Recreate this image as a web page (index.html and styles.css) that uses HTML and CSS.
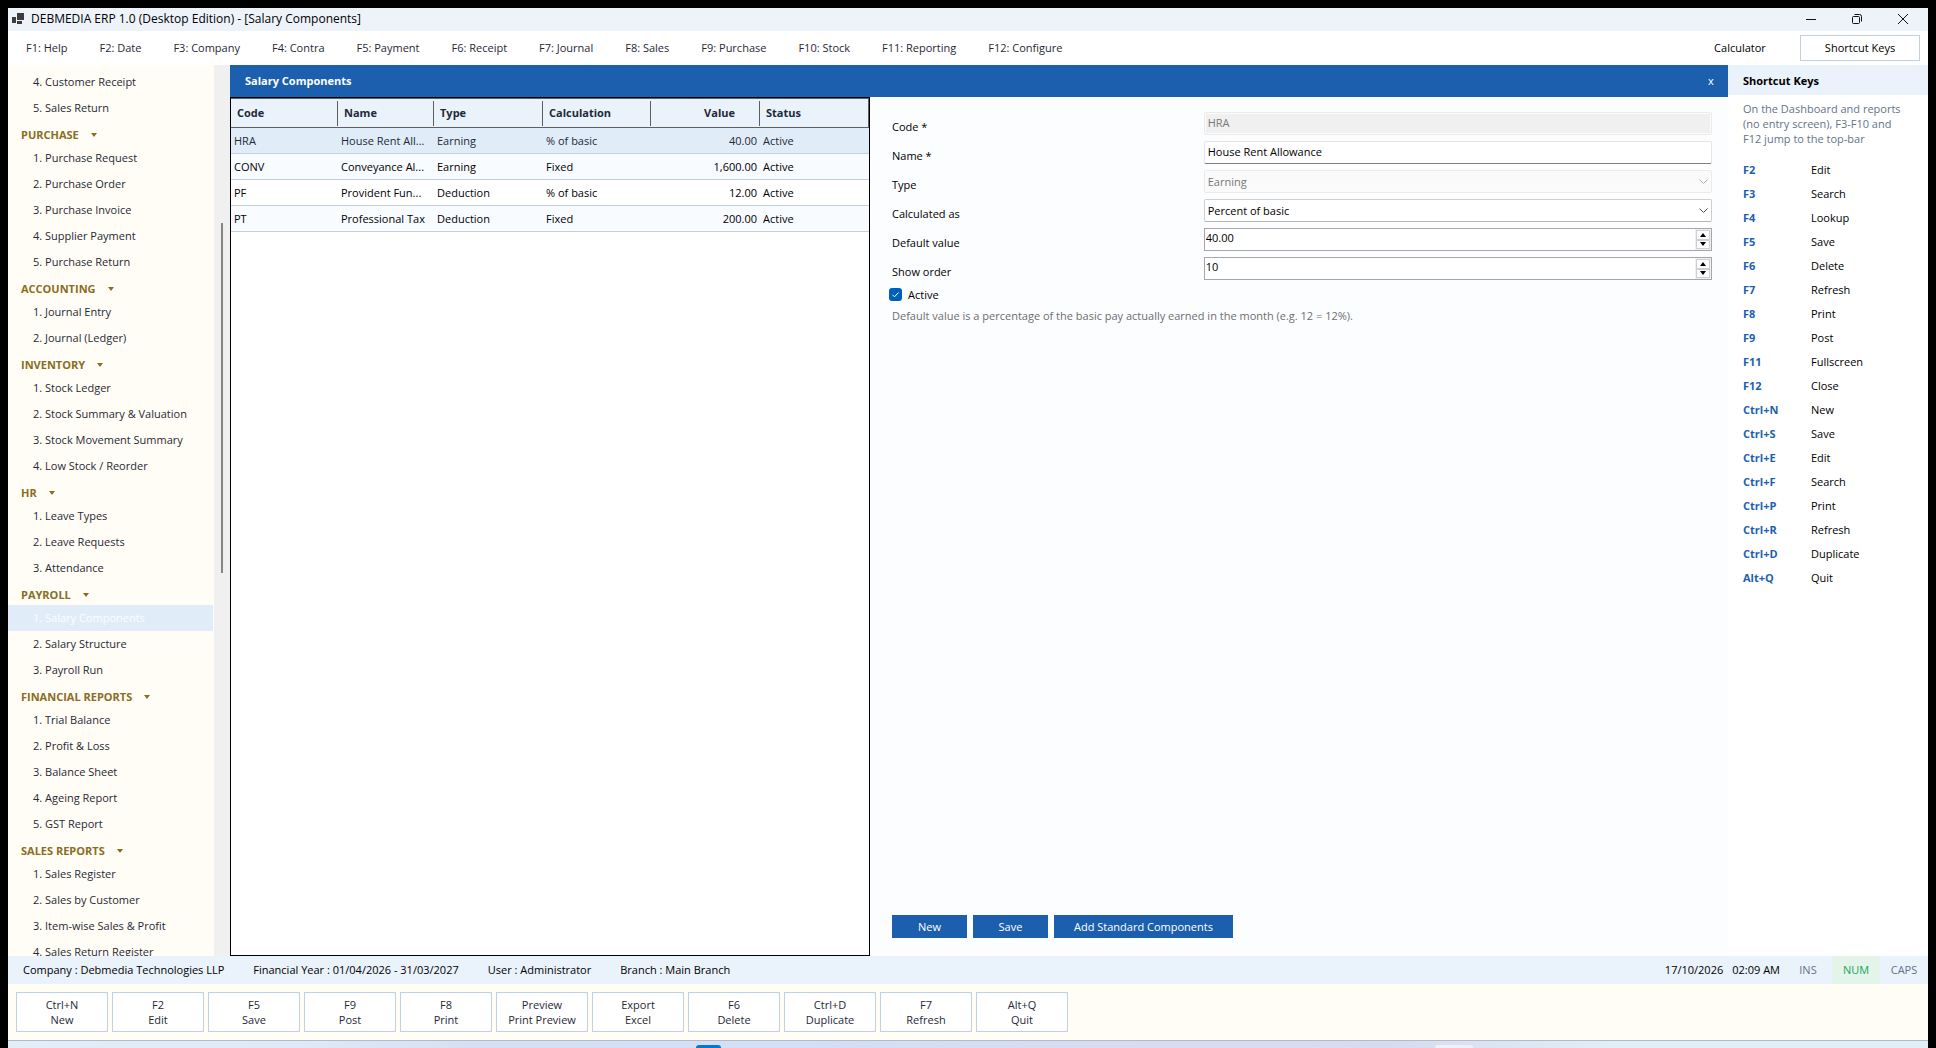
FILE: index.html
```html
<!DOCTYPE html>
<html lang="en">
<head>
<meta charset="utf-8">
<title>DEBMEDIA ERP 1.0 (Desktop Edition) - [Salary Components]</title>
<link rel="stylesheet" href="styles.css">
</head>
<body>
<div class="window">
  <header class="titlebar">
    <svg class="app-icon" width="13" height="12" viewBox="0 0 13 12"><path fill="#3d3d3d" d="M5 0h7v7H5zM0 4h4v6H0zM5 8h5v3H5z"/></svg>
    <h1 class="app-title">DEBMEDIA ERP 1.0 (Desktop Edition) - [Salary Components]</h1>
    <div class="window-controls">
      <button type="button" class="window-button" aria-label="Minimize"><svg width="10" height="10" viewBox="0 0 10 10"><path d="M0 5.5h10"/></svg></button>
      <button type="button" class="window-button" aria-label="Restore"><svg width="10" height="10" viewBox="0 0 10 10"><rect x=".5" y="2.5" width="7" height="7" rx="1"/><path d="M2.5.5h5a2 2 0 0 1 2 2v5"/></svg></button>
      <button type="button" class="window-button" aria-label="Close"><svg width="10" height="10" viewBox="0 0 10 10"><path d="M0 0l10 10M10 0L0 10"/></svg></button>
    </div>
  </header>

  <nav class="menubar">
    <button type="button" class="menu-item">F1: Help</button>
    <button type="button" class="menu-item">F2: Date</button>
    <button type="button" class="menu-item">F3: Company</button>
    <button type="button" class="menu-item">F4: Contra</button>
    <button type="button" class="menu-item">F5: Payment</button>
    <button type="button" class="menu-item">F6: Receipt</button>
    <button type="button" class="menu-item">F7: Journal</button>
    <button type="button" class="menu-item">F8: Sales</button>
    <button type="button" class="menu-item">F9: Purchase</button>
    <button type="button" class="menu-item">F10: Stock</button>
    <button type="button" class="menu-item">F11: Reporting</button>
    <button type="button" class="menu-item">F12: Configure</button>
    <div class="menu-tools">
      <button type="button" class="tool-button">Calculator</button>
      <button type="button" class="tool-button tool-button-active">Shortcut Keys</button>
    </div>
  </nav>

  <div class="workspace">
    <div class="sidebar">
      <nav class="tree">
        <a class="tree-item" href="#">4. Customer Receipt</a>
        <a class="tree-item" href="#">5. Sales Return</a>
        <h2 class="tree-group">PURCHASE</h2>
        <a class="tree-item" href="#">1. Purchase Request</a>
        <a class="tree-item" href="#">2. Purchase Order</a>
        <a class="tree-item" href="#">3. Purchase Invoice</a>
        <a class="tree-item" href="#">4. Supplier Payment</a>
        <a class="tree-item" href="#">5. Purchase Return</a>
        <h2 class="tree-group">ACCOUNTING</h2>
        <a class="tree-item" href="#">1. Journal Entry</a>
        <a class="tree-item" href="#">2. Journal (Ledger)</a>
        <h2 class="tree-group">INVENTORY</h2>
        <a class="tree-item" href="#">1. Stock Ledger</a>
        <a class="tree-item" href="#">2. Stock Summary &amp; Valuation</a>
        <a class="tree-item" href="#">3. Stock Movement Summary</a>
        <a class="tree-item" href="#">4. Low Stock / Reorder</a>
        <h2 class="tree-group">HR</h2>
        <a class="tree-item" href="#">1. Leave Types</a>
        <a class="tree-item" href="#">2. Leave Requests</a>
        <a class="tree-item" href="#">3. Attendance</a>
        <h2 class="tree-group">PAYROLL</h2>
        <a class="tree-item tree-item-selected" href="#">1. Salary Components</a>
        <a class="tree-item" href="#">2. Salary Structure</a>
        <a class="tree-item" href="#">3. Payroll Run</a>
        <h2 class="tree-group">FINANCIAL REPORTS</h2>
        <a class="tree-item" href="#">1. Trial Balance</a>
        <a class="tree-item" href="#">2. Profit &amp; Loss</a>
        <a class="tree-item" href="#">3. Balance Sheet</a>
        <a class="tree-item" href="#">4. Ageing Report</a>
        <a class="tree-item" href="#">5. GST Report</a>
        <h2 class="tree-group">SALES REPORTS</h2>
        <a class="tree-item" href="#">1. Sales Register</a>
        <a class="tree-item" href="#">2. Sales by Customer</a>
        <a class="tree-item" href="#">3. Item-wise Sales &amp; Profit</a>
        <a class="tree-item" href="#">4. Sales Return Register</a>
      </nav>
      <div class="scroll-track"><div class="scroll-thumb"></div></div>
    </div>

    <main class="document">
      <div class="document-header">
        <h2 class="document-title">Salary Components</h2>
        <button type="button" class="document-close" aria-label="Close Salary Components">x</button>
      </div>
      <div class="document-body">
        <div class="grid-pane">
          <table class="grid">
            <colgroup><col class="col-code"><col class="col-name"><col class="col-type"><col class="col-calculation"><col class="col-value"><col></colgroup>
            <thead>
              <tr><th>Code</th><th>Name</th><th>Type</th><th>Calculation</th><th class="value">Value</th><th>Status</th></tr>
            </thead>
            <tbody>
              <tr class="selected"><td>HRA</td><td>House Rent All...</td><td>Earning</td><td>% of basic</td><td class="value">40.00</td><td>Active</td></tr>
              <tr><td>CONV</td><td>Conveyance Al...</td><td>Earning</td><td>Fixed</td><td class="value">1,600.00</td><td>Active</td></tr>
              <tr><td>PF</td><td>Provident Fun...</td><td>Deduction</td><td>% of basic</td><td class="value">12.00</td><td>Active</td></tr>
              <tr><td>PT</td><td>Professional Tax</td><td>Deduction</td><td>Fixed</td><td class="value">200.00</td><td>Active</td></tr>
            </tbody>
          </table>
        </div>
        <form class="editor">
          <div class="fields">
            <label class="field-label" for="code">Code *</label>
            <input class="field" id="code" type="text" value="HRA" disabled>
            <label class="field-label" for="name">Name *</label>
            <input class="field field-name" id="name" type="text" value="House Rent Allowance">
            <label class="field-label" for="type">Type</label>
            <div class="picker">
              <select class="field" id="type" disabled><option>Earning</option></select>
              <svg class="chevron chevron-disabled" width="9" height="5" viewBox="0 0 9 5"><path d="M.5.5l4 4 4-4"/></svg>
            </div>
            <label class="field-label" for="calculated">Calculated as</label>
            <div class="picker">
              <select class="field" id="calculated"><option>Percent of basic</option></select>
              <svg class="chevron" width="9" height="5" viewBox="0 0 9 5"><path d="M.5.5l4 4 4-4"/></svg>
            </div>
            <label class="field-label" for="default-value">Default value</label>
            <div class="spinner">
              <input class="spinner-input" id="default-value" type="text" value="40.00">
              <div class="spinner-buttons">
                <button type="button" class="spin" aria-label="Increase default value"><svg width="6" height="4" viewBox="0 0 6 4"><path d="M3 0l3 4H0z"/></svg></button>
                <button type="button" class="spin" aria-label="Decrease default value"><svg width="6" height="4" viewBox="0 0 6 4"><path d="M0 0h6L3 4z"/></svg></button>
              </div>
            </div>
            <label class="field-label" for="show-order">Show order</label>
            <div class="spinner">
              <input class="spinner-input" id="show-order" type="text" value="10">
              <div class="spinner-buttons">
                <button type="button" class="spin" aria-label="Increase show order"><svg width="6" height="4" viewBox="0 0 6 4"><path d="M3 0l3 4H0z"/></svg></button>
                <button type="button" class="spin" aria-label="Decrease show order"><svg width="6" height="4" viewBox="0 0 6 4"><path d="M0 0h6L3 4z"/></svg></button>
              </div>
            </div>
          </div>
          <label class="active-row">
            <span class="tick-box">
              <input class="tick-input" type="checkbox" checked>
              <svg class="tick-mark" width="13" height="13" viewBox="0 0 13 13"><path d="M3.5 6.8l2 2 4-4.3"/></svg>
            </span>
            Active
          </label>
          <p class="hint">Default value is a percentage of the basic pay actually earned in the month (e.g. 12 = 12%).</p>
          <div class="editor-actions">
            <button type="button" class="primary">New</button>
            <button type="button" class="primary">Save</button>
            <button type="button" class="primary primary-wide">Add Standard Components</button>
          </div>
        </form>
      </div>
    </main>

    <aside class="shortcuts">
      <h2 class="shortcuts-title">Shortcut Keys</h2>
      <p class="shortcuts-note">On the Dashboard and reports (no entry screen), F3-F10 and F12 jump to the top-bar</p>
      <dl class="shortcut-list">
        <dt>F2</dt><dd>Edit</dd>
        <dt>F3</dt><dd>Search</dd>
        <dt>F4</dt><dd>Lookup</dd>
        <dt>F5</dt><dd>Save</dd>
        <dt>F6</dt><dd>Delete</dd>
        <dt>F7</dt><dd>Refresh</dd>
        <dt>F8</dt><dd>Print</dd>
        <dt>F9</dt><dd>Post</dd>
        <dt>F11</dt><dd>Fullscreen</dd>
        <dt>F12</dt><dd>Close</dd>
        <dt>Ctrl+N</dt><dd>New</dd>
        <dt>Ctrl+S</dt><dd>Save</dd>
        <dt>Ctrl+E</dt><dd>Edit</dd>
        <dt>Ctrl+F</dt><dd>Search</dd>
        <dt>Ctrl+P</dt><dd>Print</dd>
        <dt>Ctrl+R</dt><dd>Refresh</dd>
        <dt>Ctrl+D</dt><dd>Duplicate</dd>
        <dt>Alt+Q</dt><dd>Quit</dd>
      </dl>
    </aside>
  </div>

  <div class="statusbar">
    <span>Company : Debmedia Technologies LLP</span>
    <span>Financial Year : 01/04/2026 - 31/03/2027</span>
    <span>User : Administrator</span>
    <span>Branch : Main Branch</span>
    <div class="status-right">
      <span>17/10/2026</span>
      <span class="status-time">02:09 AM</span>
      <span class="lock">INS</span>
      <span class="lock lock-on">NUM</span>
      <span class="lock">CAPS</span>
    </div>
  </div>

  <div class="actionbar">
    <button type="button" class="action">Ctrl+N<br>New</button>
    <button type="button" class="action">F2<br>Edit</button>
    <button type="button" class="action">F5<br>Save</button>
    <button type="button" class="action">F9<br>Post</button>
    <button type="button" class="action">F8<br>Print</button>
    <button type="button" class="action">Preview<br>Print Preview</button>
    <button type="button" class="action">Export<br>Excel</button>
    <button type="button" class="action">F6<br>Delete</button>
    <button type="button" class="action">Ctrl+D<br>Duplicate</button>
    <button type="button" class="action">F7<br>Refresh</button>
    <button type="button" class="action">Alt+Q<br>Quit</button>
  </div>

  <div class="taskbar">
    <span class="task-icon"></span>
    <span class="task-tray"></span>
  </div>
</div>
</body>
</html>
```

FILE: styles.css
```css
* {
  box-sizing: border-box;
}

body {
  margin: 0;
  background: #000;
  color: #000;
  font: 11px/16px "Open Sans", "Noto Sans", sans-serif;
}

h1, h2, p, dl, dd {
  margin: 0;
  font-size: inherit;
}

button, input, select {
  font: inherit;
  color: inherit;
  margin: 0;
  border-radius: 0;
}

button {
  padding: 0;
  border: 0;
  background: none;
}

.window {
  display: flex;
  flex-direction: column;
  height: 100vh;
  padding: 8px 8px 0;
}

/* Title bar */
.titlebar {
  display: flex;
  align-items: center;
  height: 23px;
  padding: 0 2px 1px 4px;
  background: #eef3fa;
}

.app-title {
  margin-left: 6px;
  font-size: 12px;
  font-weight: 400;
}

.window-controls {
  display: flex;
  margin-left: auto;
}

.window-button {
  display: flex;
  align-items: center;
  justify-content: center;
  width: 46px;
  height: 20px;
}

.window-button svg {
  fill: none;
  stroke: #111;
}

/* Menu bar */
.menubar {
  display: flex;
  align-items: center;
  height: 34px;
  padding: 0 8px 0 2px;
  background: #fff;
  color: #1f2937;
}

.menu-item {
  padding: 4px 16px;
}

.menu-tools {
  display: flex;
  margin-left: auto;
  color: #000;
}

.tool-button {
  width: 120px;
  height: 26px;
}

.tool-button-active {
  border: 1px solid #bfd0e6;
}

/* Workspace */
.workspace {
  display: flex;
  flex: 1;
  min-height: 0;
}

.sidebar {
  display: flex;
  flex: 0 0 222px;
  overflow: hidden;
  background: #fffdf5;
}

.tree {
  flex: 1;
  padding-top: 4px;
}

.tree-item {
  display: block;
  height: 26px;
  margin-right: 1px;
  padding-left: 25px;
  color: #1f2937;
  line-height: 26px;
  text-decoration: none;
  white-space: nowrap;
}

.tree-item-selected {
  background: #e1ecf9;
  color: #fbfdff;
}

.tree-group {
  display: flex;
  align-items: center;
  gap: 12px;
  height: 24px;
  padding: 3px 0 0 13px;
  color: #8a6d1f;
  font-weight: 700;
}

.tree-group::after {
  content: "";
  border: 3px solid transparent;
  border-top: 4px solid #8a6d1f;
  border-bottom: 0;
}

.scroll-track {
  width: 16px;
  padding: 158px 7px 0;
  background: #f0f0f0;
}

.scroll-thumb {
  width: 2px;
  height: 350px;
  background: #858585;
}

/* Document */
.document {
  display: flex;
  flex: 1;
  flex-direction: column;
  background: #fcfdff;
}

.document-header {
  display: flex;
  align-items: center;
  justify-content: space-between;
  height: 32px;
  padding: 0 9px 0 15px;
  background: #1c5fae;
  color: #fff;
}

.document-title {
  font-weight: 700;
}

.document-close {
  width: 16px;
}

.document-body {
  display: grid;
  flex: 1;
  grid-template-columns: 640fr 858fr;
}

.grid-pane {
  border: 1px solid #000;
  background: #fff;
}

.grid {
  width: 100%;
  table-layout: fixed;
  border-collapse: separate;
  border-spacing: 0;
}

.col-code { width: 107px; }
.col-name { width: 96px; }
.col-type { width: 109px; }
.col-calculation { width: 108px; }
.col-value { width: 109px; }

.grid th {
  height: 30px;
  padding: 0 6px;
  border: solid #5f5f5f;
  border-width: 1px 0;
  background:
    linear-gradient(#5f5f5f, #5f5f5f) right center / 1px 25px no-repeat,
    #eaf2fc;
  color: #1f2937;
  font-weight: 700;
  text-align: left;
}

.grid th:last-child {
  border-right-width: 1px;
  background: #eaf2fc;
}

.grid th.value {
  padding-right: 25px;
}

.grid td {
  height: 26px;
  padding: 0 3px;
  overflow: hidden;
  border-bottom: 1px solid #c3d0e3;
  white-space: nowrap;
}

.grid .value {
  text-align: right;
}

.grid tbody tr:nth-child(even) {
  background: #f8fbff;
}

.grid .selected {
  background: #e1ecf9;
  color: #1f2937;
}

/* Editor form */
.editor {
  display: flex;
  flex-direction: column;
  padding: 12px 16px 18px;
}

.fields {
  display: grid;
  grid-template-columns: 5fr 8fr;
  grid-auto-rows: 29px;
  align-items: center;
}

.field-label {
  padding: 6px 0 0 6px;
}

.field {
  width: 100%;
  height: 23px;
  padding: 0 3px 2px;
  border: 1px solid #e6e6e6;
  border-radius: 2px;
  background: #fff;
}

.field:disabled {
  border-color: #ebebeb;
  background: #f0f0f0;
  box-shadow: inset 0 0 0 1px #fbfbfb;
  color: #787878;
  opacity: 1;
}

.field-name {
  border-bottom-color: #808080;
}

.picker {
  display: grid;
  align-items: center;
}

.picker .field,
.chevron {
  grid-area: 1 / 1;
}

.picker .field {
  appearance: none;
  padding: 0 3px;
  border-color: #cfcfcf;
  border-bottom-color: #b5b5b5;
}

.picker .field:disabled {
  border-color: #ebebeb;
  background: #fafafa;
}

.chevron {
  justify-self: end;
  margin-right: 4px;
  fill: none;
  stroke: #505050;
  pointer-events: none;
}

.chevron-disabled {
  stroke: #b0b0b0;
}

.spinner {
  display: flex;
  height: 23px;
  border: 1px solid #a5a5ab;
  background: #fff;
}

.spinner-input {
  flex: 1;
  min-width: 0;
  padding: 0 1px 4px;
  border: 0;
  background: none;
}

.spinner-buttons {
  display: flex;
  flex-direction: column;
  width: 16px;
  padding: 1px;
  background: #f0f0f0;
}

.spin {
  display: flex;
  flex: 1;
  align-items: center;
  justify-content: center;
  border: 1px solid #cfcfcf;
  background: #fdfdfd;
}

.active-row {
  display: flex;
  align-items: center;
  gap: 6px;
  height: 23px;
  padding-left: 3px;
}

.tick-box {
  display: grid;
}

.tick-input,
.tick-mark {
  grid-area: 1 / 1;
}

.tick-input {
  appearance: none;
  width: 13px;
  height: 13px;
  margin: 0;
  border-radius: 3px;
  background: #005fb8;
}

.tick-mark {
  fill: none;
  stroke: #fff;
  pointer-events: none;
}

.hint {
  padding: 2px 0 0 6px;
  color: #6e6e6e;
}

.editor-actions {
  display: flex;
  gap: 6px;
  margin-top: auto;
  padding-left: 6px;
}

.primary {
  width: 75px;
  height: 23px;
  background: #1c5fae;
  color: #fff;
}

.primary-wide {
  width: 179px;
}

/* Shortcut panel */
.shortcuts {
  flex: 0 0 200px;
  background: #fff;
}

.shortcuts-title {
  height: 30px;
  padding-left: 15px;
  background: #eaf2fc;
  font-weight: 700;
  line-height: 31px;
}

.shortcuts-note {
  padding: 6px 24px 0 15px;
  color: #64748b;
  line-height: 15px;
}

.shortcut-list {
  display: grid;
  grid-template-columns: 68px 1fr;
  padding: 12px 0 0 15px;
  line-height: 24px;
}

.shortcut-list dt {
  color: #1c5fae;
  font-weight: 700;
}

/* Status bar */
.statusbar {
  display: flex;
  align-items: center;
  gap: 29px;
  height: 28px;
  padding-left: 15px;
  background: #eaf2fc;
}

.status-right {
  display: flex;
  margin-left: auto;
  line-height: 28px;
}

.status-time {
  margin: 0 4px 0 9px;
}

.lock {
  width: 48px;
  color: #64748b;
  text-align: center;
}

.lock-on {
  background: #e3f5ea;
  color: #22a35a;
}

/* Action bar */
.actionbar {
  display: flex;
  gap: 4px;
  height: 56px;
  padding: 8px;
  background: #fffdf5;
}

.action {
  width: 92px;
  border: 1px solid #bfd0e6;
  background: #fff;
  color: #1f2937;
  line-height: 15px;
}

/* Taskbar edge */
.taskbar {
  display: flex;
  justify-content: space-between;
  align-items: flex-end;
  height: 8px;
  padding: 0 455px 0 688px;
  border-top: 1px solid #b4bac6;
  background: linear-gradient(90deg, #e3eef9, #dfe8f8 16%, #d6dff5 24%, #d2e0f8 38%, #d8dcf2 60%, #d6dcf0 72%, #e2eef8 84%, #e3eff8);
}

.task-icon {
  width: 25px;
  height: 3px;
  border-radius: 4px 4px 0 0;
  background: #0078d4;
}

.task-tray {
  width: 38px;
  height: 3px;
  border-radius: 3px 3px 0 0;
  background: #eef1fa;
}
```
